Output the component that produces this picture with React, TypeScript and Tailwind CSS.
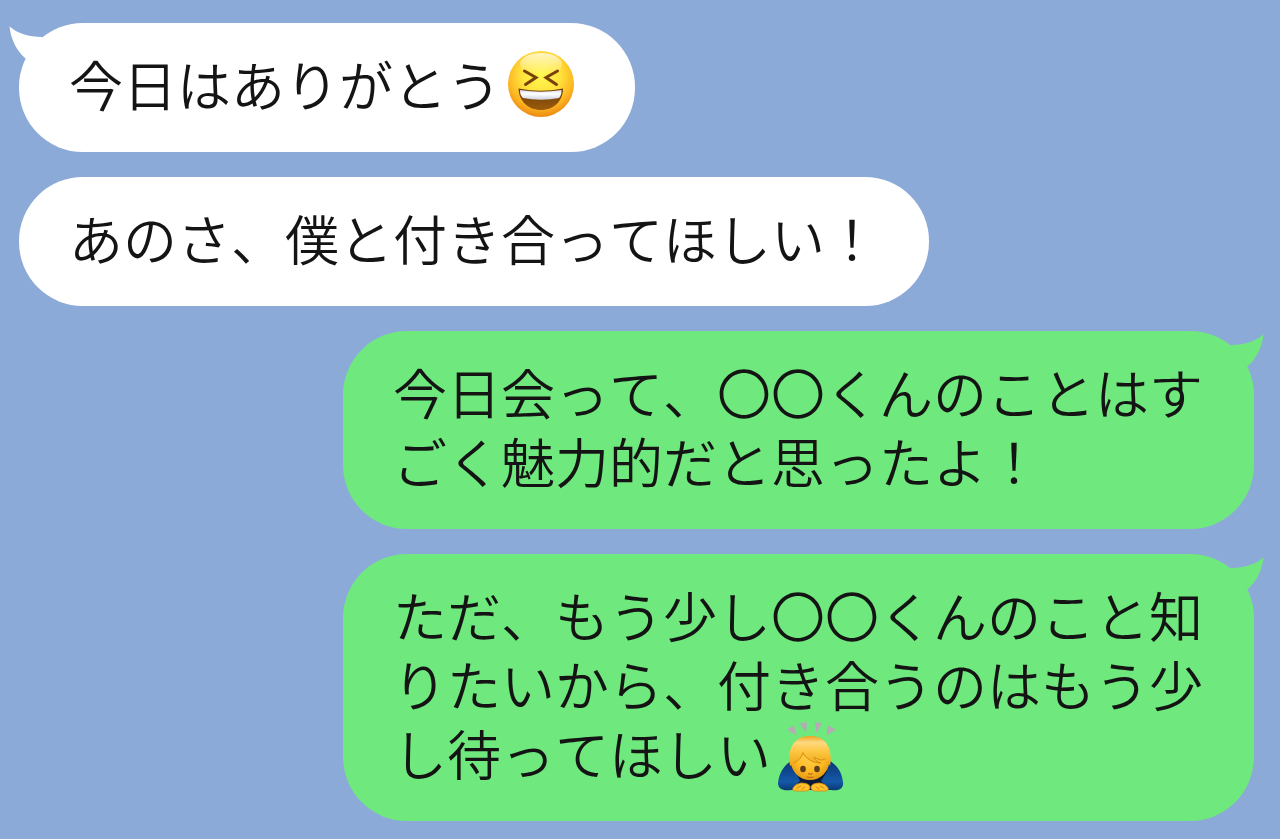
import React from 'react';

type Side = 'left' | 'right';

interface Message {
    id: number;
    side: Side;
    text: string;
    tail?: boolean;
    emoji?: 'laugh' | 'bow';
}

const messages: Message[] = [
    { id: 1, side: 'left', text: '今日はありがとう', tail: true, emoji: 'laugh' },
    { id: 2, side: 'left', text: 'あのさ、僕と付き合ってほしい！' },
    { id: 3, side: 'right', text: '今日会って、〇〇くんのことはすごく魅力的だと思ったよ！', tail: true },
    { id: 4, side: 'right', text: 'ただ、もう少し〇〇くんのこと知りたいから、付き合うのはもう少し待ってほしい', tail: true, emoji: 'bow' },
];

const LaughEmoji: React.FC = () => (
    <svg viewBox="0 0 68 68" className="inline-block w-[68px] h-[68px] ml-[6px] mr-[10px] -mt-5 -mb-1 align-middle" role="img" aria-label="大笑い">
        <defs>
            <radialGradient id="laughFace" cx="0.5" cy="0.36" r="0.66">
                <stop offset="0" stopColor="#fff94f" />
                <stop offset="0.45" stopColor="#ffe23c" />
                <stop offset="0.75" stopColor="#fdb823" />
                <stop offset="1" stopColor="#ea820f" />
            </radialGradient>
            <linearGradient id="laughShine" x1="0" y1="0" x2="0" y2="1">
                <stop offset="0" stopColor="#ffffff" stopOpacity="0.7" />
                <stop offset="1" stopColor="#ffffff" stopOpacity="0" />
            </linearGradient>
            <linearGradient id="laughMouth" x1="0" y1="0" x2="0" y2="1">
                <stop offset="0" stopColor="#6f3a08" />
                <stop offset="1" stopColor="#9a5c0d" />
            </linearGradient>
            <linearGradient id="laughTeeth" x1="0" y1="0" x2="0" y2="1">
                <stop offset="0" stopColor="#d9dee8" />
                <stop offset="0.4" stopColor="#ffffff" />
                <stop offset="1" stopColor="#ccd2dc" />
            </linearGradient>
        </defs>
        <circle cx="34" cy="34" r="33" fill="url(#laughFace)" />
        <ellipse cx="34" cy="14" rx="21" ry="11" fill="url(#laughShine)" />
        <path d="M17.5 21L29 27.5L18.5 34.5M50.5 21L39 27.500L49.500 34.5" fill="none" stroke="#78410c" strokeWidth="3" strokeLinecap="round" strokeLinejoin="miter" />
        <path d="M11.500 38.500Q34 43 56 38.500C56 51 47 60 34 60C21 60 12 51 11.500 38.500Z" fill="url(#laughMouth)" />
        <path d="M13 40Q34 43.500 54.500 40Q54.500 45.500 52 48Q34 51.500 16 48Q13 45.500 13 40Z" fill="url(#laughTeeth)" />
    </svg>
);

const BowEmoji: React.FC = () => (
    <svg viewBox="0 0 68 72" className="inline-block w-[68px] h-[72px] ml-[6px] -mt-6 -mb-4 align-middle" role="img" aria-label="お辞儀">
        <defs>
            <radialGradient id="bowHead" cx="0.5" cy="0.4" r="0.65">
                <stop offset="0" stopColor="#ffd452" />
                <stop offset="0.6" stopColor="#fdbb25" />
                <stop offset="1" stopColor="#e0900f" />
            </radialGradient>
            <linearGradient id="bowHair" x1="0" y1="0" x2="0" y2="1">
                <stop offset="0" stopColor="#eda521" />
                <stop offset="0.22" stopColor="#ffd982" />
                <stop offset="0.5" stopColor="#fdc743" />
                <stop offset="1" stopColor="#efa514" />
            </linearGradient>
            <linearGradient id="bowSleeve" x1="0" y1="0" x2="0" y2="1">
                <stop offset="0" stopColor="#0b3474" />
                <stop offset="0.7" stopColor="#1459a8" />
                <stop offset="1" stopColor="#0b3972" />
            </linearGradient>
        </defs>
        <g fill="#b5aab5">
            <path d="M10 8.500L17 4.500L19.500 14.500Z" />
            <path d="M23 2.500L30 1L29 12Z" />
            <path d="M38 1L45 2.500L39 12Z" />
            <path d="M51 4.500L59 8.500L49.500 14.500Z" />
        </g>
        <path d="M14 40C6 45 2 53 1 62C1 68 6 70 14 69L54 69C61 70 67 68 66 61C65 52 61 45 53 40Z" fill="url(#bowSleeve)" />
        <path d="M17 50Q21 54 23 60L17 66L33 69L50 66L44 60Q48 54 50 50L43 42H25Z" fill="#091b38" />
        <path d="M33 15C20 15 13 24 13 36C13 49 21 59 33 59C45 59 53 49 53 36C53 24 46 15 33 15Z" fill="url(#bowHead)" />
        <path d="M13 45C10 28 17 15 33 15C50 15 56 29 53 45C52 42 50 40 48 38C45 40 41 39 37 36C38 39 41 41 44 42C36 42 29 38 26 32C24 38 20 40 17 42C15 43 14 44 13 45Z" fill="url(#bowHair)" />
        <path d="M26 32C29 38 36 42 44 42C41 41 38 39 37 36C41 39 45 40 48 38M26 32C24 38 20 40 17 42" fill="none" stroke="#d58c12" strokeWidth="1" strokeLinecap="round" strokeLinejoin="round" />
        <ellipse cx="26" cy="48" rx="2.800" ry="3.200" fill="#5d3d1a" />
        <ellipse cx="40" cy="48" rx="2.800" ry="3.200" fill="#5d3d1a" />
        <path d="M31.500 52.500Q33 54 35 52.500M30 56Q33 57 36 56" fill="none" stroke="#c9701a" strokeWidth="1.300" strokeLinecap="round" />
        <path d="M16 67Q18 63 24 62Q32 62 33 66Q33 70 28 70H19Q15 70 16 67ZM51 67Q49 63 43 62Q35 62 34 66Q34 70 39 70H48Q52 70 51 67Z" fill="#ffc02c" stroke="#d68b12" strokeWidth="0.800" />
        <path d="M20 67L24 65M25 68L28 66M47 67L43 65M42 68L39 66" fill="none" stroke="#d68b12" strokeWidth="1" strokeLinecap="round" />
    </svg>
);

const Tail: React.FC<{ side: Side }> = ({ side }) => (
    <svg
        viewBox="0 0 40 40"
        aria-hidden="true"
        className={side === 'left'
            ? 'absolute top-[3px] -left-[10px] w-10 h-10 fill-white'
            : 'absolute top-[3px] -right-[10px] w-10 h-10 fill-[#6fe87e] -scale-x-100'}
    >
        <path d="M0.500 0.500C8 7 20 11 33 11L38 20L26 40L16 32C8 25 2 14 0.500 0.500Z" />
    </svg>
);

const Bubble: React.FC<{ message: Message }> = ({ message }) => {
    const { side, text, tail, emoji } = message;
    return (
        <li className={side === 'left' ? 'flex justify-start' : 'flex justify-end'}>
            <div
                className={side === 'left'
                    ? 'relative max-w-[911px] rounded-[64px] bg-white px-[50px] pt-[26px] pb-[34px]'
                    : 'relative max-w-[911px] rounded-[64px] bg-[#6fe87e] px-[50px] pt-[26px] pb-[34px]'}
            >
                {tail && <Tail side={side} />}
                <p className="relative text-[54px] leading-[69px] [font-kerning:none]">
                    {text}
                    {emoji === 'laugh' && <LaughEmoji />}
                    {emoji === 'bow' && <BowEmoji />}
                </p>
            </div>
        </li>
    );
};

const App: React.FC = () => {
    return (
        <main lang="ja" className="min-h-screen bg-[#8caad8] pt-[23px] pb-[17px] pl-[19px] pr-[26px] text-[#141414] font-[350] font-['Noto_Sans_CJK_JP',sans-serif]">
            <ul className="flex flex-col gap-[25px]">
                {messages.map((m) => (
                    <Bubble key={m.id} message={m} />
                ))}
            </ul>
        </main>
    );
};

export default App;
